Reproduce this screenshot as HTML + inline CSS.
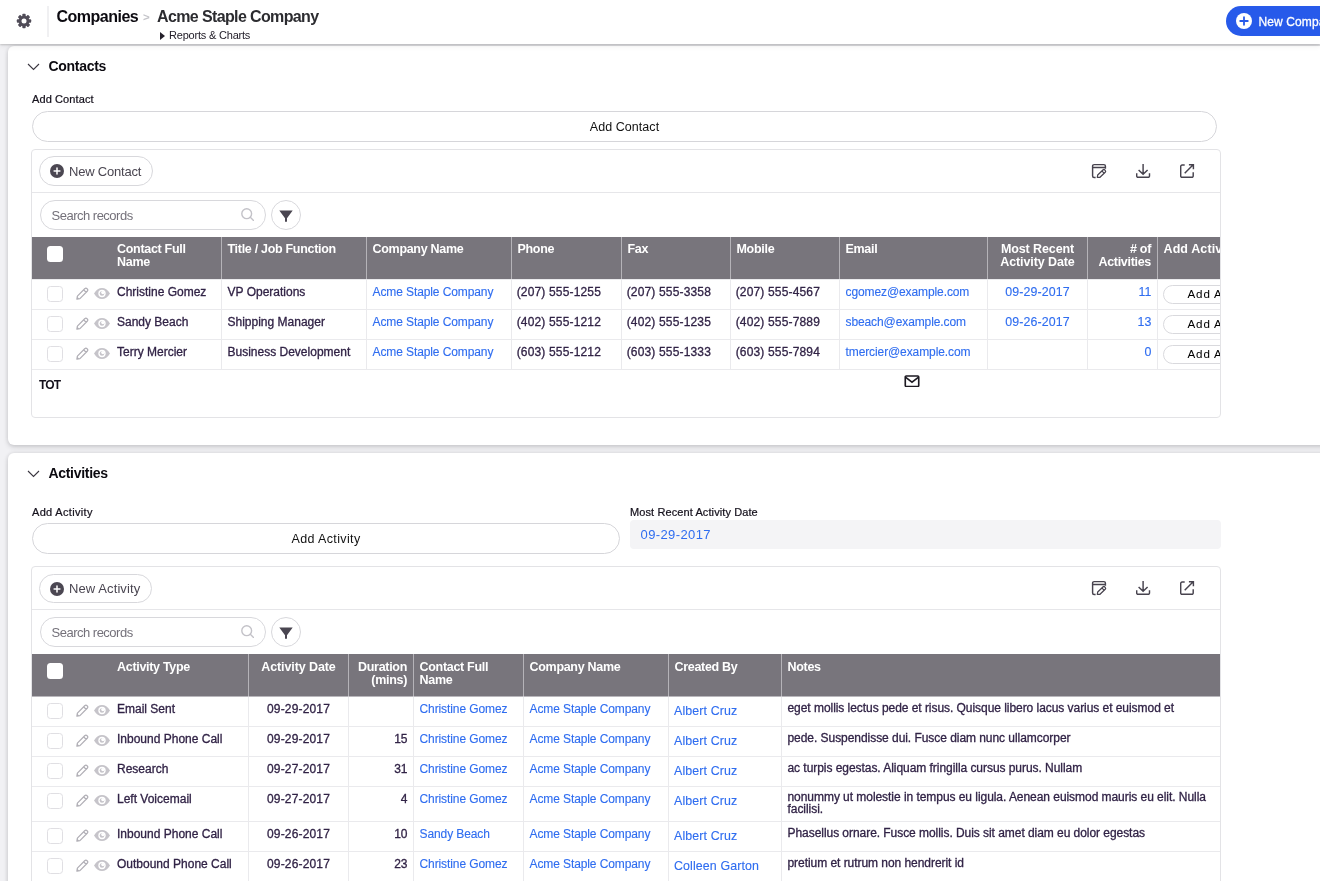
<!DOCTYPE html>
<html lang="en">
<head>
<meta charset="utf-8">
<title>Acme Staple Company - Companies</title>
<style>
*{box-sizing:border-box;}
html,body{margin:0;padding:0;}
body{width:1320px;height:881px;overflow:hidden;position:relative;background:#f1f1f4;font-family:"Liberation Sans",sans-serif;color:#1b1425;font-size:12px;}
a{color:#2f6df0;text-decoration:none;}
/* top bar */
.topbar{position:absolute;left:0;top:0;width:1320px;height:44px;background:#fff;box-shadow:0 1px 2px rgba(0,0,0,.19),0 2px 6px rgba(0,0,0,.07);z-index:5;will-change:transform;}
.gear{position:absolute;left:15.8px;top:12.6px;width:16px;height:16px;}
.vsep{position:absolute;left:47.2px;top:6px;width:1.6px;height:31px;background:#f0f0f2;}
.crumb{position:absolute;left:56.500px;top:7px;font-size:16px;font-weight:bold;color:#0c0a10;white-space:nowrap;line-height:20px;letter-spacing:-0.5px;}
.crumb .sep{color:#c4c4c9;font-weight:bold;font-size:11.5px;padding:0 7.2px 0 4.8px;position:relative;top:-1.5px;letter-spacing:0;}
.crumb .rec{letter-spacing:-0.62px;color:#2c2c30;}
.reports{position:absolute;left:160px;top:29px;font-size:11px;line-height:13px;color:#24202b;white-space:nowrap;letter-spacing:-0.2px;}
.reports .tri{display:inline-block;width:0;height:0;border-left:5px solid #24202b;border-top:4px solid transparent;border-bottom:4px solid transparent;margin-right:4px;position:relative;top:0.5px;}
.newco{position:absolute;left:1226px;top:6px;width:140px;height:30px;border-radius:15px;background:#275aea;color:#fff;font-size:12px;line-height:32px;padding-left:32.500px;white-space:nowrap;-webkit-text-stroke:0.3px #fff;letter-spacing:0.1px;}
.newco .plus{position:absolute;left:10px;top:7px;width:16px;height:16px;}
/* cards */
.card{position:absolute;left:8px;width:1340px;background:#fff;border-radius:6px;box-shadow:0 2px 5px rgba(30,30,36,.17),0 0 5px rgba(30,30,36,.09);will-change:transform;}
.sect{position:absolute;left:40.4px;font-size:14px;font-weight:bold;color:#0c0a10;line-height:18px;white-space:nowrap;letter-spacing:-0.28px;}
.chev{position:absolute;left:19px;width:13px;height:8px;}
.lbl{position:absolute;font-size:11px;line-height:13px;color:#15111c;white-space:nowrap;letter-spacing:0.1px;-webkit-text-stroke:0.22px #15111c;}
.pill{position:absolute;height:30.500px;border:1px solid #d6d6da;border-radius:15.500px;background:#fff;text-align:center;font-size:12.500px;line-height:30px;color:#111;white-space:nowrap;letter-spacing:0.05px;}
.field{position:absolute;background:#f4f4f6;border-radius:4px;height:29px;font-size:13px;line-height:30px;padding-left:10.500px;color:#2f6df0;letter-spacing:0.4px;}
/* report container */
.rpt{position:absolute;left:23px;width:1190px;border:1px solid #e3e3e6;border-radius:4px;overflow:hidden;background:#fff;}
.tb1{position:relative;height:43px;border-bottom:1px solid #e6e6e9;}
.tb2{position:relative;height:44px;}
.newbtn{position:absolute;left:7px;top:6px;height:30px;border:1px solid #d8d8dc;border-radius:15px;padding:0 10.7px 0 29px;font-size:13px;line-height:29.6px;color:#4a4651;white-space:nowrap;letter-spacing:-0.21px;}
.newbtn svg{position:absolute;left:10px;top:7px;width:14px;height:14px;}
.ticon{position:absolute;top:14px;width:14px;height:14px;overflow:visible;}
.search{position:absolute;left:8px;top:7px;width:226px;height:30px;border:1px solid #d8d8dc;border-radius:15px;font-size:13px;line-height:29.2px;padding-left:10.500px;color:#74717a;letter-spacing:-0.5px;}
.search svg{position:absolute;right:11.1px;top:7.2px;width:13px;height:13px;}
.filt{position:absolute;left:239px;top:7px;width:30px;height:30px;border:1px solid #d8d8dc;border-radius:15px;}
.filt svg{position:absolute;left:7px;top:8.8px;width:14px;height:13px;}
/* grid */
.grid{display:grid;width:1260px;}
.h{background:#78757c;color:#fff;font-weight:bold;font-size:12.500px;line-height:13px;height:42px;padding:6.4px 5px 0 5.5px;border-left:1px solid #b5b3b8;overflow:hidden;letter-spacing:-0.3px;}
.h.first{border-left:none;position:relative;padding-left:85px;}
.h.c{text-align:center;padding-left:5px;letter-spacing:-0.1px;}
.h.r{text-align:right;padding-right:6px;}
.g2 .h{padding-top:6.8px;}
.note.tall{padding-top:4.3px;}
.g2 .d:nth-child(n+8):nth-child(-n+14){border-top-color:#b9b7bc;}
.d.ph{padding-left:4.700px;}
.d.c.ph{padding-left:5px;}
.hcb{position:absolute;left:15px;top:9px;width:16px;height:16px;border-radius:3.500px;background:#fff;}
.d{height:30px;border-left:1px solid #eaeaed;border-top:1px solid #eaeaed;padding:5.500px 5.500px 0 5.500px;font-size:12px;line-height:13px;color:#312346;white-space:nowrap;overflow:hidden;-webkit-text-stroke:0.3px #312346;}
.d.first{border-left:none;position:relative;padding-left:85px;}
.d.c{text-align:center;padding-left:5px;padding-right:5px;}
.d.r{text-align:right;}
.d a{-webkit-text-stroke:0.12px #2f6df0;}
.d.lk{padding-top:6px;}
.d.lk a{font-size:12px;letter-spacing:-0.1px;}
.d.lk.c,.d.lk.r{padding-top:5.500px;}
.d.lk.c a,.d.lk.r a{font-size:12.400px;letter-spacing:0.1px;}
.d.ph{letter-spacing:0.16px;}
.d.cb a{font-size:12.400px;letter-spacing:0.12px;}
.d.cb{padding-top:8.250px;padding-left:5px;}
.cbx{position:absolute;left:15px;top:6px;width:16px;height:16px;border-radius:3.500px;border:1px solid #e0dfe3;background:#fff;}
.pen{position:absolute;left:43.500px;top:6.5px;width:13px;height:13px;}
.eye{position:absolute;left:62px;top:8px;width:16px;height:11px;}
.tall{height:35px;}
.note{white-space:normal;line-height:12px;padding-top:5px;letter-spacing:-0.05px;}
.addbtn{display:block;margin:-0.750px 0 0 -0.750px;width:110px;height:19px;border:1px solid #d9d9dd;border-radius:10px;font-size:11.6px;line-height:16.6px;color:#000;text-align:left;padding-left:23.750px;letter-spacing:0.85px;-webkit-text-stroke:0;}
.tot{height:48px;position:relative;border-top:1px solid #eaeaed;}
.tot b{position:absolute;left:7px;top:8px;font-size:12px;letter-spacing:-0.9px;color:#15111c;line-height:14px;}
.tot svg{position:absolute;left:872px;top:4.500px;width:16px;height:12.500px;}
</style>
</head>
<body>

<div class="topbar">
  <svg class="gear" viewBox="-8 -8 16 16"><g fill="#504c58"><circle r="5.300"/><rect x="-1.700" y="-7.200" width="3.400" height="4" rx="0.900" transform="rotate(0)"/><rect x="-1.700" y="-7.200" width="3.400" height="4" rx="0.900" transform="rotate(45)"/><rect x="-1.700" y="-7.200" width="3.400" height="4" rx="0.900" transform="rotate(90)"/><rect x="-1.700" y="-7.200" width="3.400" height="4" rx="0.900" transform="rotate(135)"/><rect x="-1.700" y="-7.200" width="3.400" height="4" rx="0.900" transform="rotate(180)"/><rect x="-1.700" y="-7.200" width="3.400" height="4" rx="0.900" transform="rotate(225)"/><rect x="-1.700" y="-7.200" width="3.400" height="4" rx="0.900" transform="rotate(270)"/><rect x="-1.700" y="-7.200" width="3.400" height="4" rx="0.900" transform="rotate(315)"/></g><circle r="2.500" fill="#fff"/></svg>
  <div class="vsep"></div>
  <div class="crumb">Companies<span class="sep">&gt;</span><span class="rec">Acme Staple Company</span></div>
  <div class="reports"><span class="tri"></span>Reports &amp; Charts</div>
  <div class="newco"><svg class="plus" viewBox="0 0 16 16"><circle cx="8" cy="8" r="8" fill="#fff"/><path d="M8 4.200v7.600M4.200 8h7.600" stroke="#275aea" stroke-width="1.800" stroke-linecap="round"/></svg>New Company</div>
</div>

<!-- CONTACTS -->
<div class="card" style="top:46px;height:399px;">
  <svg class="chev" style="top:17px;" viewBox="0 0 13 8"><path d="M1 1l5.500 5.500L12 1" fill="none" stroke="#3a3640" stroke-width="1.100"/></svg>
  <div class="sect" style="top:11px;">Contacts</div>
  <div class="lbl" style="left:24px;top:47px;">Add Contact</div>
  <div class="pill" style="left:24px;top:65px;width:1185px;">Add Contact</div>

  <div class="rpt" style="top:103px;">
    <div class="tb1">
      <div class="newbtn"><svg viewBox="0 0 14 14"><circle cx="7" cy="7" r="7" fill="#4b4752"/><path d="M7 4.100v5.800M4.100 7h5.800" stroke="#fff" stroke-width="1.500" stroke-linecap="round"/></svg>New Contact</div>
      <svg class="ticon" style="left:1060px;" viewBox="0 0 14 14"><path d="M3.600 13.400H2.100A1.500 1.500 0 0 1 .6 11.900V2.100A1.500 1.500 0 0 1 2.100.6h9.800a1.500 1.500 0 0 1 1.500 1.500v2.600M.6 3.400h12.800" fill="none" stroke="#47434e" stroke-width="1.450"/><path d="M5.300 13.300l.4-2.300 5.200-5a1.350 1.350 0 0 1 1.900 0l.4.400a1.350 1.350 0 0 1 0 1.900l-5.200 5z" fill="none" stroke="#47434e" stroke-width="1.250" stroke-linejoin="round"/><path d="M9.900 7l2.200 2.200" stroke="#47434e" stroke-width="1.100"/></svg>
      <svg class="ticon" style="left:1104px;" viewBox="0 0 14 14"><path d="M7.100 0v10M2.600 5.900l4.500 4.400 4.500-4.400M.7 9.300v2.600a1.400 1.400 0 0 0 1.400 1.400h10a1.400 1.400 0 0 0 1.400-1.400V9.300" fill="none" stroke="#47434e" stroke-width="1.450"/></svg>
      <svg class="ticon" style="left:1148px;" viewBox="0 0 14 14"><path d="M4.700 1H2.100A1.400 1.400 0 0 0 .7 2.400v9.500a1.400 1.400 0 0 0 1.400 1.400h9.700a1.400 1.400 0 0 0 1.400-1.400V8.300M4.700 9.300L13.200.8M8.900.7h4.500v4.500" fill="none" stroke="#47434e" stroke-width="1.450"/></svg>
    </div>
    <div class="tb2">
      <div class="search">Search records<svg viewBox="0 0 13 13"><circle cx="5.700" cy="5.700" r="4.900" fill="none" stroke="#c3c2c8" stroke-width="1.400"/><path d="M9.300 9.300l3.300 3.300" stroke="#c3c2c8" stroke-width="1.400" stroke-linecap="round"/></svg></div>
      <div class="filt"><svg viewBox="0 0 14 13"><path d="M.3.500h13.400L8 8.200v2.900a1 1 0 0 1-2 0V8.200z" fill="#4a4651"/></svg></div>
    </div>
    <div class="grid" style="grid-template-columns:189px 145px 145px 110px 109px 109px 148px 100px 70px 135px;">
      <div class="h first"><span class="hcb"></span>Contact Full Name</div>
      <div class="h">Title / Job Function</div>
      <div class="h">Company Name</div>
      <div class="h">Phone</div>
      <div class="h">Fax</div>
      <div class="h">Mobile</div>
      <div class="h">Email</div>
      <div class="h c">Most Recent Activity Date</div>
      <div class="h r">#&nbsp;of Activities</div>
      <div class="h" style="letter-spacing:0.1px;">Add Activity</div>

      <div class="d first"><span class="cbx"></span><svg class="pen" viewBox="0 0 13 13"><path d="M.9 12.100l.5-3L8.700 1.800a1.700 1.700 0 0 1 2.400 0l.1.100a1.700 1.700 0 0 1 0 2.400L3.900 11.600zM7.700 2.900l2.400 2.400" fill="none" stroke="#b1afb6" stroke-width="1.250" stroke-linejoin="round"/><path d="M.9 12.100l.4-2.300 1.900 1.900z" fill="#b1afb6"/></svg><svg class="eye" viewBox="0 0 16 11"><path d="M0 5.500C2.300 1.700 5 0 8 0s5.700 1.700 8 5.500C13.700 9.300 11 11 8 11S2.300 9.300 0 5.500z" fill="#c6c4ca"/><circle cx="8" cy="5.500" r="3.700" fill="#fff"/><circle cx="8" cy="5.500" r="2.300" fill="#c6c4ca"/><circle cx="8.900" cy="4.600" r="1.700" fill="#fff"/></svg>Christine Gomez</div>
      <div class="d">VP Operations</div>
      <div class="d lk"><a>Acme Staple Company</a></div>
      <div class="d ph">(207) 555-1255</div>
      <div class="d ph">(207) 555-3358</div>
      <div class="d ph">(207) 555-4567</div>
      <div class="d lk"><a>cgomez@example.com</a></div>
      <div class="d lk c"><a>09-29-2017</a></div>
      <div class="d lk r"><a>11</a></div>
      <div class="d"><span class="addbtn">Add Activity</span></div>

      <div class="d first"><span class="cbx"></span><svg class="pen" viewBox="0 0 13 13"><path d="M.9 12.100l.5-3L8.700 1.800a1.700 1.700 0 0 1 2.400 0l.1.100a1.700 1.700 0 0 1 0 2.400L3.900 11.600zM7.700 2.900l2.400 2.400" fill="none" stroke="#b1afb6" stroke-width="1.250" stroke-linejoin="round"/><path d="M.9 12.100l.4-2.300 1.900 1.900z" fill="#b1afb6"/></svg><svg class="eye" viewBox="0 0 16 11"><path d="M0 5.500C2.300 1.700 5 0 8 0s5.700 1.700 8 5.500C13.700 9.300 11 11 8 11S2.300 9.300 0 5.500z" fill="#c6c4ca"/><circle cx="8" cy="5.500" r="3.700" fill="#fff"/><circle cx="8" cy="5.500" r="2.300" fill="#c6c4ca"/><circle cx="8.900" cy="4.600" r="1.700" fill="#fff"/></svg>Sandy Beach</div>
      <div class="d">Shipping Manager</div>
      <div class="d lk"><a>Acme Staple Company</a></div>
      <div class="d ph">(402) 555-1212</div>
      <div class="d ph">(402) 555-1235</div>
      <div class="d ph">(402) 555-7889</div>
      <div class="d lk"><a>sbeach@example.com</a></div>
      <div class="d lk c"><a>09-26-2017</a></div>
      <div class="d lk r"><a>13</a></div>
      <div class="d"><span class="addbtn">Add Activity</span></div>

      <div class="d first"><span class="cbx"></span><svg class="pen" viewBox="0 0 13 13"><path d="M.9 12.100l.5-3L8.700 1.800a1.700 1.700 0 0 1 2.400 0l.1.100a1.700 1.700 0 0 1 0 2.400L3.900 11.600zM7.700 2.900l2.400 2.400" fill="none" stroke="#b1afb6" stroke-width="1.250" stroke-linejoin="round"/><path d="M.9 12.100l.4-2.300 1.900 1.900z" fill="#b1afb6"/></svg><svg class="eye" viewBox="0 0 16 11"><path d="M0 5.500C2.300 1.700 5 0 8 0s5.700 1.700 8 5.500C13.700 9.300 11 11 8 11S2.300 9.300 0 5.500z" fill="#c6c4ca"/><circle cx="8" cy="5.500" r="3.700" fill="#fff"/><circle cx="8" cy="5.500" r="2.300" fill="#c6c4ca"/><circle cx="8.900" cy="4.600" r="1.700" fill="#fff"/></svg>Terry Mercier</div>
      <div class="d">Business Development</div>
      <div class="d lk"><a>Acme Staple Company</a></div>
      <div class="d ph">(603) 555-1212</div>
      <div class="d ph">(603) 555-1333</div>
      <div class="d ph">(603) 555-7894</div>
      <div class="d lk"><a>tmercier@example.com</a></div>
      <div class="d lk c"></div>
      <div class="d lk r"><a>0</a></div>
      <div class="d"><span class="addbtn">Add Activity</span></div>
    </div>
    <div class="tot"><b>TOT</b><svg viewBox="0 0 16 13"><rect x="1" y="1" width="14" height="11" rx="1" fill="none" stroke="#1d1a22" stroke-width="1.700"/><path d="M1.500 2.500L8 7.500l6.500-5" fill="none" stroke="#1d1a22" stroke-width="1.600"/></svg></div>
  </div>
</div>

<!-- ACTIVITIES -->
<div class="card" style="top:453px;height:470px;">
  <svg class="chev" style="top:17px;" viewBox="0 0 13 8"><path d="M1 1l5.500 5.500L12 1" fill="none" stroke="#3a3640" stroke-width="1.100"/></svg>
  <div class="sect" style="top:11px;">Activities</div>
  <div class="lbl" style="left:24px;top:53px;letter-spacing:0.32px;">Add Activity</div>
  <div class="pill" style="left:24px;top:70px;width:588px;letter-spacing:0.37px;">Add Activity</div>
  <div class="lbl" style="left:622px;top:53px;">Most Recent Activity Date</div>
  <div class="field" style="left:622px;top:67px;width:591px;">09-29-2017</div>

  <div class="rpt" style="top:113px;height:400px;">
    <div class="tb1">
      <div class="newbtn" style="top:7px;height:29px;letter-spacing:0.1px;line-height:27.600px;"><svg viewBox="0 0 14 14"><circle cx="7" cy="7" r="7" fill="#4b4752"/><path d="M7 4.100v5.800M4.100 7h5.800" stroke="#fff" stroke-width="1.500" stroke-linecap="round"/></svg>New Activity</div>
      <svg class="ticon" style="left:1060px;" viewBox="0 0 14 14"><path d="M3.600 13.400H2.100A1.500 1.500 0 0 1 .6 11.900V2.100A1.500 1.500 0 0 1 2.100.6h9.800a1.500 1.500 0 0 1 1.500 1.500v2.600M.6 3.400h12.800" fill="none" stroke="#47434e" stroke-width="1.450"/><path d="M5.300 13.300l.4-2.300 5.200-5a1.350 1.350 0 0 1 1.900 0l.4.400a1.350 1.350 0 0 1 0 1.900l-5.200 5z" fill="none" stroke="#47434e" stroke-width="1.250" stroke-linejoin="round"/><path d="M9.900 7l2.200 2.200" stroke="#47434e" stroke-width="1.100"/></svg>
      <svg class="ticon" style="left:1104px;" viewBox="0 0 14 14"><path d="M7.100 0v10M2.600 5.900l4.500 4.400 4.500-4.400M.7 9.300v2.600a1.400 1.400 0 0 0 1.400 1.400h10a1.400 1.400 0 0 0 1.400-1.400V9.300" fill="none" stroke="#47434e" stroke-width="1.450"/></svg>
      <svg class="ticon" style="left:1148px;" viewBox="0 0 14 14"><path d="M4.700 1H2.100A1.400 1.400 0 0 0 .7 2.400v9.500a1.400 1.400 0 0 0 1.400 1.400h9.700a1.400 1.400 0 0 0 1.400-1.400V8.300M4.700 9.300L13.200.8M8.900.7h4.500v4.500" fill="none" stroke="#47434e" stroke-width="1.450"/></svg>
    </div>
    <div class="tb2">
      <div class="search">Search records<svg viewBox="0 0 13 13"><circle cx="5.700" cy="5.700" r="4.900" fill="none" stroke="#c3c2c8" stroke-width="1.400"/><path d="M9.300 9.300l3.300 3.300" stroke="#c3c2c8" stroke-width="1.400" stroke-linecap="round"/></svg></div>
      <div class="filt"><svg viewBox="0 0 14 13"><path d="M.3.500h13.400L8 8.200v2.900a1 1 0 0 1-2 0V8.200z" fill="#4a4651"/></svg></div>
    </div>
    <div class="grid g2" style="grid-template-columns:216px 100px 65px 110px 145px 113px 439px;">
      <div class="h first"><span class="hcb"></span>Activity Type</div>
      <div class="h c">Activity Date</div>
      <div class="h r">Duration (mins)</div>
      <div class="h">Contact Full Name</div>
      <div class="h">Company Name</div>
      <div class="h">Created By</div>
      <div class="h">Notes</div>

      <div class="d first"><span class="cbx"></span><svg class="pen" viewBox="0 0 13 13"><path d="M.9 12.100l.5-3L8.700 1.800a1.700 1.700 0 0 1 2.400 0l.1.100a1.700 1.700 0 0 1 0 2.400L3.900 11.600zM7.700 2.900l2.400 2.400" fill="none" stroke="#b1afb6" stroke-width="1.250" stroke-linejoin="round"/><path d="M.9 12.100l.4-2.300 1.900 1.900z" fill="#b1afb6"/></svg><svg class="eye" viewBox="0 0 16 11"><path d="M0 5.500C2.300 1.700 5 0 8 0s5.700 1.700 8 5.500C13.700 9.300 11 11 8 11S2.300 9.300 0 5.500z" fill="#c6c4ca"/><circle cx="8" cy="5.500" r="3.700" fill="#fff"/><circle cx="8" cy="5.500" r="2.300" fill="#c6c4ca"/><circle cx="8.900" cy="4.600" r="1.700" fill="#fff"/></svg>Email Sent</div>
      <div class="d c ph">09-29-2017</div>
      <div class="d r"></div>
      <div class="d lk"><a>Christine Gomez</a></div>
      <div class="d lk"><a>Acme Staple Company</a></div>
      <div class="d cb"><a>Albert Cruz</a></div>
      <div class="d note">eget mollis lectus pede et risus. Quisque libero lacus varius et euismod et</div>
      <div class="d first"><span class="cbx"></span><svg class="pen" viewBox="0 0 13 13"><path d="M.9 12.100l.5-3L8.700 1.800a1.700 1.700 0 0 1 2.400 0l.1.100a1.700 1.700 0 0 1 0 2.400L3.900 11.600zM7.700 2.900l2.400 2.400" fill="none" stroke="#b1afb6" stroke-width="1.250" stroke-linejoin="round"/><path d="M.9 12.100l.4-2.300 1.900 1.900z" fill="#b1afb6"/></svg><svg class="eye" viewBox="0 0 16 11"><path d="M0 5.500C2.300 1.700 5 0 8 0s5.700 1.700 8 5.500C13.700 9.300 11 11 8 11S2.300 9.300 0 5.500z" fill="#c6c4ca"/><circle cx="8" cy="5.500" r="3.700" fill="#fff"/><circle cx="8" cy="5.500" r="2.300" fill="#c6c4ca"/><circle cx="8.900" cy="4.600" r="1.700" fill="#fff"/></svg>Inbound Phone Call</div>
      <div class="d c ph">09-29-2017</div>
      <div class="d r">15</div>
      <div class="d lk"><a>Christine Gomez</a></div>
      <div class="d lk"><a>Acme Staple Company</a></div>
      <div class="d cb"><a>Albert Cruz</a></div>
      <div class="d note">pede. Suspendisse dui. Fusce diam nunc ullamcorper</div>
      <div class="d first"><span class="cbx"></span><svg class="pen" viewBox="0 0 13 13"><path d="M.9 12.100l.5-3L8.700 1.800a1.700 1.700 0 0 1 2.400 0l.1.100a1.700 1.700 0 0 1 0 2.400L3.900 11.600zM7.700 2.900l2.400 2.400" fill="none" stroke="#b1afb6" stroke-width="1.250" stroke-linejoin="round"/><path d="M.9 12.100l.4-2.300 1.900 1.900z" fill="#b1afb6"/></svg><svg class="eye" viewBox="0 0 16 11"><path d="M0 5.500C2.300 1.700 5 0 8 0s5.700 1.700 8 5.500C13.700 9.300 11 11 8 11S2.300 9.300 0 5.500z" fill="#c6c4ca"/><circle cx="8" cy="5.500" r="3.700" fill="#fff"/><circle cx="8" cy="5.500" r="2.300" fill="#c6c4ca"/><circle cx="8.900" cy="4.600" r="1.700" fill="#fff"/></svg>Research</div>
      <div class="d c ph">09-27-2017</div>
      <div class="d r">31</div>
      <div class="d lk"><a>Christine Gomez</a></div>
      <div class="d lk"><a>Acme Staple Company</a></div>
      <div class="d cb"><a>Albert Cruz</a></div>
      <div class="d note">ac turpis egestas. Aliquam fringilla cursus purus. Nullam</div>
      <div class="d first tall"><span class="cbx"></span><svg class="pen" viewBox="0 0 13 13"><path d="M.9 12.100l.5-3L8.700 1.800a1.700 1.700 0 0 1 2.400 0l.1.100a1.700 1.700 0 0 1 0 2.400L3.900 11.600zM7.700 2.900l2.400 2.400" fill="none" stroke="#b1afb6" stroke-width="1.250" stroke-linejoin="round"/><path d="M.9 12.100l.4-2.300 1.900 1.900z" fill="#b1afb6"/></svg><svg class="eye" viewBox="0 0 16 11"><path d="M0 5.500C2.300 1.700 5 0 8 0s5.700 1.700 8 5.500C13.700 9.300 11 11 8 11S2.300 9.300 0 5.500z" fill="#c6c4ca"/><circle cx="8" cy="5.500" r="3.700" fill="#fff"/><circle cx="8" cy="5.500" r="2.300" fill="#c6c4ca"/><circle cx="8.900" cy="4.600" r="1.700" fill="#fff"/></svg>Left Voicemail</div>
      <div class="d c ph tall">09-27-2017</div>
      <div class="d r tall">4</div>
      <div class="d lk tall"><a>Christine Gomez</a></div>
      <div class="d lk tall"><a>Acme Staple Company</a></div>
      <div class="d cb tall"><a>Albert Cruz</a></div>
      <div class="d note tall">nonummy ut molestie in tempus eu ligula. Aenean euismod mauris eu elit. Nulla facilisi.</div>
      <div class="d first"><span class="cbx"></span><svg class="pen" viewBox="0 0 13 13"><path d="M.9 12.100l.5-3L8.700 1.800a1.700 1.700 0 0 1 2.400 0l.1.100a1.700 1.700 0 0 1 0 2.400L3.900 11.600zM7.700 2.900l2.400 2.400" fill="none" stroke="#b1afb6" stroke-width="1.250" stroke-linejoin="round"/><path d="M.9 12.100l.4-2.300 1.900 1.900z" fill="#b1afb6"/></svg><svg class="eye" viewBox="0 0 16 11"><path d="M0 5.500C2.300 1.700 5 0 8 0s5.700 1.700 8 5.500C13.700 9.300 11 11 8 11S2.300 9.300 0 5.500z" fill="#c6c4ca"/><circle cx="8" cy="5.500" r="3.700" fill="#fff"/><circle cx="8" cy="5.500" r="2.300" fill="#c6c4ca"/><circle cx="8.900" cy="4.600" r="1.700" fill="#fff"/></svg>Inbound Phone Call</div>
      <div class="d c ph">09-26-2017</div>
      <div class="d r">10</div>
      <div class="d lk"><a>Sandy Beach</a></div>
      <div class="d lk"><a>Acme Staple Company</a></div>
      <div class="d cb"><a>Albert Cruz</a></div>
      <div class="d note">Phasellus ornare. Fusce mollis. Duis sit amet diam eu dolor egestas</div>
      <div class="d first"><span class="cbx"></span><svg class="pen" viewBox="0 0 13 13"><path d="M.9 12.100l.5-3L8.700 1.800a1.700 1.700 0 0 1 2.400 0l.1.100a1.700 1.700 0 0 1 0 2.400L3.900 11.600zM7.700 2.900l2.400 2.400" fill="none" stroke="#b1afb6" stroke-width="1.250" stroke-linejoin="round"/><path d="M.9 12.100l.4-2.300 1.900 1.900z" fill="#b1afb6"/></svg><svg class="eye" viewBox="0 0 16 11"><path d="M0 5.500C2.300 1.700 5 0 8 0s5.700 1.700 8 5.500C13.700 9.300 11 11 8 11S2.300 9.300 0 5.500z" fill="#c6c4ca"/><circle cx="8" cy="5.500" r="3.700" fill="#fff"/><circle cx="8" cy="5.500" r="2.300" fill="#c6c4ca"/><circle cx="8.900" cy="4.600" r="1.700" fill="#fff"/></svg>Outbound Phone Call</div>
      <div class="d c ph">09-26-2017</div>
      <div class="d r">23</div>
      <div class="d lk"><a>Christine Gomez</a></div>
      <div class="d lk"><a>Acme Staple Company</a></div>
      <div class="d cb"><a>Colleen Garton</a></div>
      <div class="d note">pretium et rutrum non hendrerit id</div>
    </div>
  </div>
</div>

</body>
</html>
